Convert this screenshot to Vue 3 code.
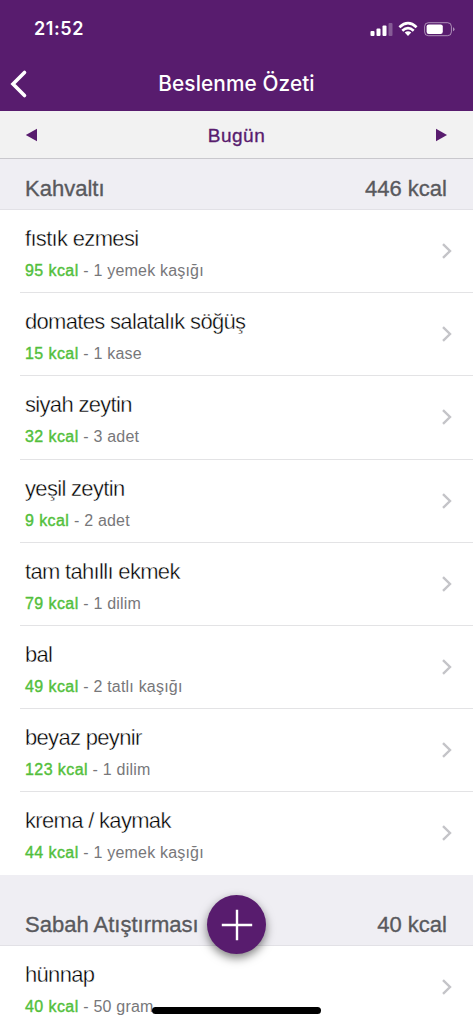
<script setup>
const sections = [
  {
    title: 'Kahvaltı',
    total: '446 kcal',
    items: [
      { name: 'fıstık ezmesi', kcal: 95, amount: '1 yemek kaşığı' },
      { name: 'domates salatalık söğüş', kcal: 15, amount: '1 kase' },
      { name: 'siyah zeytin', kcal: 32, amount: '3 adet' },
      { name: 'yeşil zeytin', kcal: 9, amount: '2 adet' },
      { name: 'tam tahıllı ekmek', kcal: 79, amount: '1 dilim' },
      { name: 'bal', kcal: 49, amount: '2 tatlı kaşığı' },
      { name: 'beyaz peynir', kcal: 123, amount: '1 dilim' },
      { name: 'krema / kaymak', kcal: 44, amount: '1 yemek kaşığı' },
    ],
  },
  {
    title: 'Sabah Atıştırması',
    total: '40 kcal',
    items: [{ name: 'hünnap', kcal: 40, amount: '50 gram' }],
  },
]
</script>

<template>
  <div class="screen">
    <header class="header">
      <div class="status">
        <span class="time">21:52</span>
        <svg class="status-icons" width="90" height="20" viewBox="0 0 90 20" fill="#fff">
          <rect x="4.5" y="11" width="4" height="5" rx="1" />
          <rect x="10.5" y="8.500" width="4" height="7.500" rx="1" />
          <rect x="16.500" y="5.500" width="4" height="10.500" rx="1" />
          <rect x="22.500" y="3" width="4" height="13" rx="1" opacity=".28" />
          <g fill="none" stroke="#fff" stroke-width="2.600">
            <path d="M33.400 7.200Q42 -.8 50.600 7.200" />
            <path d="M36.300 10.800Q42 5.400 47.700 10.800" />
          </g>
          <path d="M38.700 12.500Q42 9.900 45.300 12.500L42 15.900Z" />
          <rect x="58.600" y="2.700" width="26.800" height="13" rx="3.800" fill="none" stroke="#fff" opacity=".5" />
          <rect x="60.600" y="4.400" width="16.200" height="9.600" rx="2.200" />
          <path d="M87 7.200Q88.500 7.700 88.500 9.200T87 11.200Z" opacity=".5" />
        </svg>
      </div>
      <div class="nav">
        <svg class="back" width="20" height="30" viewBox="0 0 20 30">
          <path d="M15.500 3.500L4 15L15.500 26.500" fill="none" stroke="#fff" stroke-width="3.600" stroke-linecap="round" stroke-linejoin="miter" />
        </svg>
        <h1 class="title">Beslenme Özeti</h1>
      </div>
    </header>

    <div class="datebar">
      <svg width="12" height="14" viewBox="0 0 12 14"><path d="M0.800 7L12 .8V13.200Z" fill="#581c6e" /></svg>
      <span class="day">Bugün</span>
      <svg width="12" height="14" viewBox="0 0 12 14"><path d="M11 7L0 .8V13.200Z" fill="#581c6e" /></svg>
    </div>

    <section v-for="section in sections" :key="section.title" class="section">
      <div class="section-head">
        <span class="section-title">{{ section.title }}</span>
        <span class="section-total">{{ section.total }}</span>
      </div>
      <div v-for="item in section.items" :key="item.name" class="item">
        <div class="texts">
          <div class="name">{{ item.name }}</div>
          <div class="detail"><span class="kcal">{{ item.kcal }} kcal</span> - {{ item.amount }}</div>
        </div>
        <svg class="chevron" width="12" height="18" viewBox="0 0 12 18">
          <path d="M2 2.200L9 9L2 15.800" fill="none" stroke="#c4c4c8" stroke-width="2.400" />
        </svg>
      </div>
    </section>

    <button class="add" aria-label="Ekle">
      <svg width="32" height="32" viewBox="0 0 32 32"><path d="M16 .8V31.200M.8 16H31.200" stroke="#fff" stroke-width="2.400" /></svg>
    </button>
    <div class="home"></div>
  </div>
</template>

<style>
body {
  background: #fff;
}
</style>

<style scoped>
.screen {
  position: relative;
  width: 473px;
  height: 1024px;
  overflow: hidden;
  background: #fff;
  font-family: "Liberation Sans", Arial, sans-serif;
}
.header {
  height: 111px;
  background: #581c6e;
  color: #fff;
}
.status {
  display: flex;
  justify-content: space-between;
  align-items: flex-start;
  height: 56px;
  padding: 17px 17px 0 34px;
  box-sizing: border-box;
}
.time {
  font: 600 18px/24px Inter, sans-serif;
  letter-spacing: 0.6px;
}
.status-icons {
  margin-top: 3px;
}
.nav {
  display: flex;
  align-items: center;
  height: 55px;
  padding-left: 9px;
}
.title {
  flex: 1;
  margin: 0 29px 0 0;
  text-align: center;
  font: 500 20.8px/28px Inter, sans-serif;
  letter-spacing: 0.1px;
}
.datebar {
  display: flex;
  align-items: center;
  justify-content: space-between;
  height: 48px;
  box-sizing: border-box;
  padding: 0 25px;
  background: #f2f2f2;
  border-bottom: 1px solid #c9c8cd;
}
.day {
  color: #581c6e;
  font-size: 19px;
  letter-spacing: 0.5px;
  -webkit-text-stroke: 0.35px #581c6e;
  transform: translateY(1px);
}
.section-head {
  display: flex;
  justify-content: space-between;
  align-items: flex-end;
  height: 51px;
  box-sizing: border-box;
  padding: 0 26px 7px 25px;
  background: #efeef3;
  border-bottom: 1px solid #e2e1e6;
  color: #59595d;
  font-size: 22px;
  line-height: 26px;
  -webkit-text-stroke: 0.35px #59595d;
}
.section + .section .section-head {
  height: 71px;
}
.item {
  display: flex;
  justify-content: space-between;
  height: 83.2px;
  box-sizing: border-box;
  margin-left: 20px;
  padding: 15px 20px 0 5px;
  border-bottom: 1px solid #e3e3e5;
}
.item:last-child {
  height: 82.2px;
  border-bottom-color: transparent;
}
.name {
  color: #000;
  font-size: 22px;
  line-height: 28px;
  letter-spacing: -0.68px;
  -webkit-text-stroke: 0.4px #fff;
}
.detail {
  margin-top: 8px;
  color: #77777a;
  font-size: 16px;
  line-height: 20px;
  letter-spacing: 0.2px;
}
.kcal {
  color: #53bf3c;
  letter-spacing: 0.42px;
  -webkit-text-stroke: 0.4px #53bf3c;
}
.chevron {
  margin-top: 17px;
}
.add {
  position: absolute;
  left: 207px;
  top: 895px;
  display: flex;
  align-items: center;
  justify-content: center;
  width: 59px;
  height: 59px;
  padding: 0;
  border: 0;
  border-radius: 50%;
  background: #581c6e;
  box-shadow: 0 4px 10px rgba(0, 0, 0, 0.5);
}
.home {
  position: absolute;
  left: 152px;
  top: 1007px;
  width: 169px;
  height: 7px;
  border-radius: 4px;
  background: #000;
}
</style>
